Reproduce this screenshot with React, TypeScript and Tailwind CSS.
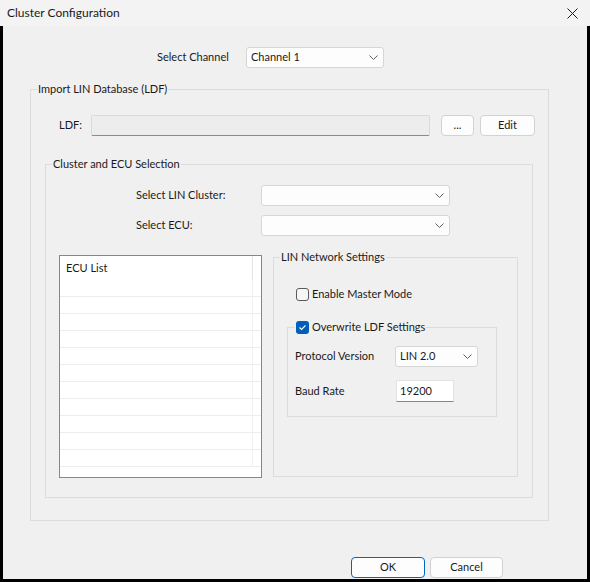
function Chevron() {
  return (
    <svg width="9" height="5" viewBox="0 0 9 5" className="shrink-0">
      <path d="M0.5 0.5L4.5 4.5L8.5 0.5" fill="none" stroke="#5f5f5f" strokeWidth="1" />
    </svg>
  )
}

function Select({ value, className }: { value?: string; className: string }) {
  return (
    <div
      className={`flex items-center justify-between rounded-[3px] border border-[#d6d6d6] bg-[#fdfdfd] pl-[4px] pr-[5px] ${className}`}
    >
      <span>{value}</span>
      <Chevron />
    </div>
  )
}

function Check({ checked }: { checked?: boolean }) {
  if (checked) {
    return (
      <span className="flex h-[13px] w-[13px] shrink-0 items-center justify-center rounded-[3px] bg-[#005fb8]">
        <svg width="9" height="7" viewBox="0 0 9 7">
          <path d="M1.5 3.5L3.5 5.5L7.5 1.5" fill="none" stroke="#ffffff" strokeWidth="1.1" />
        </svg>
      </span>
    )
  }
  return <span className="h-[13px] w-[13px] shrink-0 rounded-[3px] border border-[#5a5a5a] bg-[#f6f6f6]" />
}

function Button({ label, className }: { label: string; className: string }) {
  return (
    <div
      className={`flex h-[21px] items-center justify-center rounded-[4px] border bg-[#fdfdfd] ${className}`}
    >
      {label}
    </div>
  )
}

const rows = Array.from({ length: 11 })

export default function App() {
  return (
    <div className="flex h-[582px] w-[590px] flex-col bg-black font-['Lato',sans-serif] text-[11px] text-[#1a1a1a]">
      <div className="flex h-[26px] shrink-0 items-center justify-between bg-[#f3f3f3] pl-[7px] pr-[12px] text-[12px]">
        <span>Cluster Configuration</span>
        <svg width="11" height="11" viewBox="0 0 11 11">
          <path d="M0.5 0.5L10.5 10.5M10.5 0.5L0.5 10.5" stroke="#1a1a1a" strokeWidth="1" />
        </svg>
      </div>

      <div className="mx-[3px] mb-[3px] flex flex-1 flex-col bg-[#f0f0f0]">
        {/* channel */}
        <div className="mt-[21px] flex items-center pl-[154px]">
          <span className="w-[89px]">Select Channel</span>
          <Select value="Channel 1" className="h-[21px] w-[138px]" />
        </div>

        {/* import LDF */}
        <fieldset className="ml-[27px] mt-[13px] flex h-[440px] w-[519px] flex-col border border-[#dcdcdc]">
          <legend className="ml-[6px] px-[1px] leading-4">Import LIN Database (LDF)</legend>

          <div className="mt-[18px] flex items-center pl-[28px]">
            <span className="w-[32px]">LDF:</span>
            <div className="h-[21px] w-[339px] rounded-[2px] border border-[#dadada] border-b-[#8a8a8a] bg-[#ededed]" />
            <Button label="..." className="ml-[11px] w-[33px] border-[#d2d2d2]" />
            <Button label="Edit" className="ml-[6px] w-[55px] border-[#d2d2d2]" />
          </div>

          <fieldset className="ml-[14px] mt-[20px] flex h-[342px] w-[488px] flex-col border border-[#dcdcdc]">
            <legend className="ml-[6px] px-[1px] leading-4">Cluster and ECU Selection</legend>

            <div className="mt-[13px] flex items-center pl-[90px]">
              <span className="w-[125px]">Select LIN Cluster:</span>
              <Select className="h-[21px] w-[189px]" />
            </div>
            <div className="mt-[9px] flex items-center pl-[90px]">
              <span className="w-[125px]">Select ECU:</span>
              <Select className="h-[21px] w-[189px]" />
            </div>

            <div className="mt-[13px] flex items-start pl-[13px]">
              {/* ECU list */}
              <div className="mt-[6px] h-[223px] w-[203px] border border-[#828790] bg-white">
                <div className="flex h-[24px]">
                  <div className="flex w-[193px] items-center border-r border-[#e3e3e3] pl-[6px]">ECU List</div>
                </div>
                {rows.map((_, i) => (
                  <div key={i} className="flex h-[17px] border-b border-[#ededed]">
                    <div className="w-[193px] border-r border-[#f0f0f0]" />
                  </div>
                ))}
              </div>

              {/* LIN network settings */}
              <fieldset className="ml-[11px] flex h-[228px] w-[245px] flex-col border border-[#dcdcdc]">
                <legend className="ml-[6px] px-[1px] leading-4">LIN Network Settings</legend>

                <div className="mt-[21px] flex h-4 items-center gap-[3px] pl-[22px]">
                  <Check />
                  <span>Enable Master Mode</span>
                </div>

                <fieldset className="ml-[13px] mt-[17px] flex h-[98px] w-[210px] flex-col border border-[#dcdcdc]">
                  <legend className="ml-[7px] flex items-center gap-[3px] px-[1px] leading-4">
                    <Check checked />
                    <span>Overwrite LDF Settings</span>
                  </legend>

                  <div className="mt-[11px] flex items-center pl-[7px]">
                    <span className="w-[100px]">Protocol Version</span>
                    <Select value="LIN 2.0" className="h-[21px] w-[83px]" />
                  </div>
                  <div className="mt-[13px] flex items-center pl-[7px]">
                    <span className="w-[101px]">Baud Rate</span>
                    <div className="h-[22px] w-[58px] border border-[#e3e3e3] border-b-[#868686] bg-white pl-[3px] pt-[2px]">
                      19200
                    </div>
                  </div>
                </fieldset>
              </fieldset>
            </div>
          </fieldset>
        </fieldset>

        {/* dialog buttons */}
        <div className="mt-[36px] flex gap-[5px] pl-[348px]">
          <Button label="OK" className="w-[74px] border-[#0067c0]" />
          <Button label="Cancel" className="w-[73px] border-[#d2d2d2]" />
        </div>
      </div>
    </div>
  )
}
